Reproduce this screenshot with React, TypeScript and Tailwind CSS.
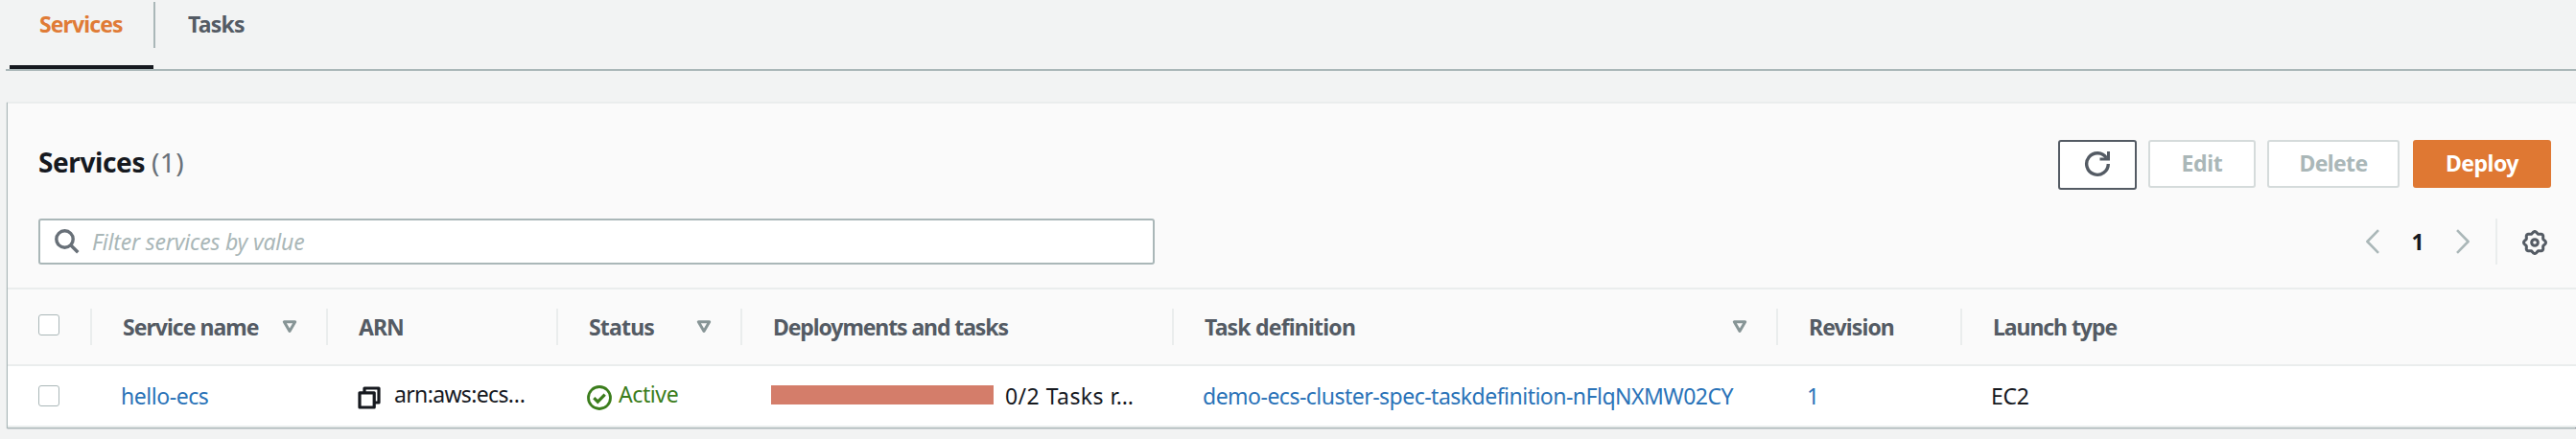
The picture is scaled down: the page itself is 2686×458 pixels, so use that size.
import type { ReactNode } from "react";

const gearOutline =
  Array.from({ length: 96 }, (_, i) => {
    const a = (i / 96) * Math.PI * 2;
    const r = 10.5 + 1 * Math.cos(8 * a);
    return `${i ? "L" : "M"}${(13 + r * Math.sin(a)).toFixed(2)} ${(13 - r * Math.cos(a)).toFixed(2)}`;
  }).join("") + "z";

function Triangle() {
  return (
    <svg className="h-4 w-4 shrink-0" viewBox="0 0 16 16" fill="none" stroke="#879596" strokeWidth="3" strokeLinejoin="round">
      <path d="M2.3 2.8h11.4L8 12.4z" />
    </svg>
  );
}

function Checkbox() {
  return <span className="block h-[22px] w-[22px] rounded-[3px] border-[1.5px] border-[#aab7b8] bg-white" />;
}

function HeaderCell({ width, label, sortable }: { width: string; label: ReactNode; sortable?: boolean }) {
  return (
    <div className={`flex h-[38px] shrink-0 items-center justify-between border-l-2 border-[#eaeded] pl-8 pr-[30px] ${width}`}>
      {label}
      {sortable && <Triangle />}
    </div>
  );
}

function Tabs() {
  return (
    <nav className="ml-1.5 flex h-[74px] border-b-2 border-[#aab7b8] pl-1 font-bold">
      <div className="flex h-[72px] w-[150px] flex-col border-b-4 border-[#16191f] pl-[31px] pt-2.5">
        <span className="leading-[30px] tracking-[-0.9px] text-[#e07b36]">Services</span>
      </div>
      <div className="mt-0.5 h-12 w-0.5 bg-[#aab7b8]" />
      <div className="pl-[34px] pt-2.5">
        <span className="block leading-[30px] tracking-[-0.75px] text-[#545b64]">Tasks</span>
      </div>
    </nav>
  );
}

function Actions() {
  return (
    <div className="flex items-start font-bold">
      <button className="flex h-[52px] w-[82px] items-center justify-center rounded-[3px] border-2 border-[#545b64] bg-white">
        <svg className="h-[28px] w-[28px]" viewBox="0 0 28 28" fill="none" stroke="#545b64" strokeWidth="3.4">
          <path d="M25.3 13A11.3 11.3 0 1 1 23.5 6.9" />
          <path d="M25.5 0v8h-9" strokeWidth="3" />
        </svg>
      </button>
      <button className="ml-3 h-[50px] w-28 rounded-[3px] border-2 border-[#d5dbdb] bg-white pb-0.5 tracking-[-0.3px] text-[#aab7b8]">Edit</button>
      <button className="ml-3 h-[50px] w-[138px] rounded-[3px] border-2 border-[#d5dbdb] bg-white pb-0.5 tracking-[-0.65px] text-[#aab7b8]">Delete</button>
      <button className="ml-3.5 h-[50px] w-36 rounded-[3px] bg-[#df7833] pb-0.5 tracking-[-0.5px] text-white">Deploy</button>
    </div>
  );
}

function Pagination() {
  return (
    <div className="flex h-12 items-center pr-1">
      <svg className="h-[26px] w-4" viewBox="0 0 16 26" fill="none" stroke="#aab7b8" strokeWidth="2.6" strokeLinejoin="round">
        <path d="M14 1.2L2.4 13 14 24.8" />
      </svg>
      <span className="w-[78px] text-center font-bold text-[#16191f]">1</span>
      <svg className="h-[26px] w-4" viewBox="0 0 16 26" fill="none" stroke="#aab7b8" strokeWidth="2.6" strokeLinejoin="round">
        <path d="M2 1.2L13.6 13 2 24.8" />
      </svg>
      <div className="ml-[26px] h-12 w-0.5 bg-[#eaeded]" />
      <svg className="mt-0.5 ml-[26px] h-[26px] w-[26px]" viewBox="0 0 26 26" fill="none" stroke="#545b64" strokeWidth="3" strokeLinejoin="round">
        <path d={gearOutline} />
        <circle cx="13" cy="13" r="3.3" />
      </svg>
    </div>
  );
}

export default function App() {
  return (
    <div className="flex h-[458px] w-full flex-col overflow-hidden bg-[#f2f3f3] font-['Noto_Sans',sans-serif] text-[23px] whitespace-nowrap text-[#16191f]">
      <Tabs />
      <section className="mt-8 ml-2 h-[340px] border-t-2 border-[#eaeded] bg-[#fafafa] shadow-[-1px_1px_1px_0_#aab7b8,0_1px_1px_0_#6b7780]">
        <div className="flex h-[120px] items-start justify-between pr-[26px] pl-8 pt-[38px]">
          <h2 className="text-[28px] leading-[46px] font-bold tracking-[-0.4px]">
            Services <span className="font-normal tracking-[0.5px] text-[#687078]">(1)</span>
          </h2>
          <Actions />
        </div>
        <div className="flex h-[72px] items-start justify-between pr-[26px] pl-8">
          <div className="flex h-12 w-[1164px] items-center rounded-[3px] border-2 border-[#aab7b8] bg-white pl-[15px]">
            <svg className="h-[26px] w-[26px]" viewBox="0 0 26 26" fill="none" stroke="#687078" strokeWidth="3.4">
              <circle cx="10.5" cy="10.5" r="8.7" />
              <path d="M16.5 16.5l7.8 7.8" />
            </svg>
            <span className="ml-[13px] tracking-[-0.2px] text-[#aab7b8] italic">Filter services by value</span>
          </div>
          <Pagination />
        </div>
        <div className="flex h-20 items-center border-t-2 border-[#eaeded] font-bold text-[#545b64]">
          <div className="w-[86px] pb-1 pl-8"><Checkbox /></div>
          <HeaderCell width="w-[246px]" sortable label={<span className="tracking-[-0.98px]">Service name</span>} />
          <HeaderCell width="w-[240px]" label={<span className="tracking-[-1px]">ARN</span>} />
          <HeaderCell width="w-[192px]" sortable label={<span className="tracking-[-0.8px]">Status</span>} />
          <HeaderCell width="w-[450px]" label={<span className="tracking-[-1.1px]">Deployments and tasks</span>} />
          <HeaderCell width="w-[630px]" sortable label={<span className="tracking-[-0.8px]">Task definition</span>} />
          <HeaderCell width="w-[192px]" label={<span className="tracking-[-0.9px]">Revision</span>} />
          <HeaderCell width="w-[400px]" label={<span className="tracking-[-1.06px]">Launch type</span>} />
        </div>
        <div className="flex h-[66px] items-center border-y-2 border-[#eaeded] bg-white">
          <div className="w-[86px] pl-8"><Checkbox /></div>
          <div className="w-[246px] pl-8 tracking-[-0.45px] text-[#2a73b8]">hello-ecs</div>
          <div className="flex w-[240px] items-center pl-[33px]">
            <svg className="mt-1 h-6 w-6" viewBox="0 0 24 24" fill="none" stroke="#16191f" strokeWidth="3.2" strokeLinejoin="round">
              <path d="M2 6.8h15.2v15.2H2z" />
              <path d="M7 6.5V2h15v15h-4.5" />
            </svg>
            <span className="mb-1 ml-3.5 tracking-[-0.65px]">arn:aws:ecs…</span>
          </div>
          <div className="flex w-[192px] items-center pl-8 text-[#3b7d1c]">
            <svg className="mt-1 h-[26px] w-[26px]" viewBox="0 0 26 26" fill="none" stroke="#3b7d1c" strokeWidth="2.8">
              <circle cx="13" cy="13" r="11.5" />
              <path d="M7.3 13.2l4 4 7.4-7.6" strokeWidth="3.2" />
            </svg>
            <span className="mb-1 ml-[7px] tracking-[-0.4px]">Active</span>
          </div>
          <div className="flex w-[450px] items-center pl-8">
            <div className="mb-0.5 h-5 w-[232px] bg-[#d47d6a]" />
            <span className="ml-3 tracking-[0.45px]">0/2 Tasks r…</span>
          </div>
          <div className="w-[630px] pl-8 tracking-[-0.51px] text-[#2a73b8]">demo-ecs-cluster-spec-taskdefinition-nFlqNXMW02CY</div>
          <div className="w-[192px] pl-8 text-[#2a73b8]">1</div>
          <div className="w-[400px] pl-8 tracking-[-0.3px]">EC2</div>
        </div>
      </section>
    </div>
  );
}
